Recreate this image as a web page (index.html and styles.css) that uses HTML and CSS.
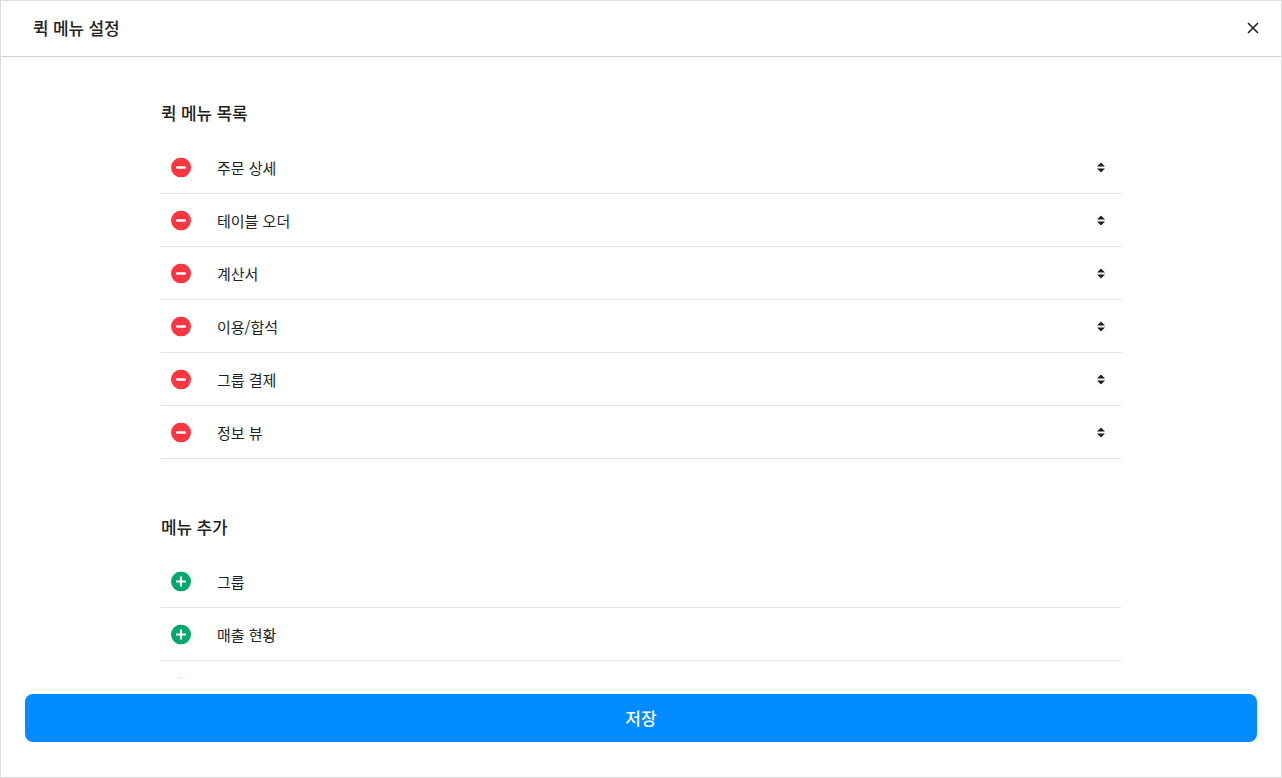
FILE: index.html
```html
<!DOCTYPE html>
<html lang="ko">
<head>
<meta charset="utf-8">
<title>퀵 메뉴 설정</title>
<link rel="stylesheet" href="styles.css">
</head>
<body>
<div class="modal">
  <header class="modal-header">
    <h1 class="modal-title">퀵 메뉴 설정</h1>
    <button class="close" aria-label="닫기">
      <svg width="12" height="12" viewBox="0 0 12 12"><path d="M1 1l10 10M11 1L1 11" stroke="#222" stroke-width="1.6" fill="none"/></svg>
    </button>
  </header>
  <main class="modal-body">
    <div class="content">
      <section class="group">
        <h2 class="group-title">퀵 메뉴 목록</h2>
        <ul class="list list-wide">
          <li class="row"><svg class="ic" viewBox="0 0 20 20"><circle cx="10" cy="10" r="10" fill="#fc3640"/><rect x="5" y="8.8" width="10" height="2.4" rx="1" fill="#fff"/></svg><span class="label">주문 상세</span><svg class="handle" viewBox="0 0 10 10"><path d="M5 0l4 4H1zM5 10L1 6h8z" fill="#1c1c1c"/></svg></li>
          <li class="row"><svg class="ic" viewBox="0 0 20 20"><circle cx="10" cy="10" r="10" fill="#fc3640"/><rect x="5" y="8.8" width="10" height="2.4" rx="1" fill="#fff"/></svg><span class="label">테이블 오더</span><svg class="handle" viewBox="0 0 10 10"><path d="M5 0l4 4H1zM5 10L1 6h8z" fill="#1c1c1c"/></svg></li>
          <li class="row"><svg class="ic" viewBox="0 0 20 20"><circle cx="10" cy="10" r="10" fill="#fc3640"/><rect x="5" y="8.8" width="10" height="2.4" rx="1" fill="#fff"/></svg><span class="label">계산서</span><svg class="handle" viewBox="0 0 10 10"><path d="M5 0l4 4H1zM5 10L1 6h8z" fill="#1c1c1c"/></svg></li>
          <li class="row"><svg class="ic" viewBox="0 0 20 20"><circle cx="10" cy="10" r="10" fill="#fc3640"/><rect x="5" y="8.8" width="10" height="2.4" rx="1" fill="#fff"/></svg><span class="label">이용/합석</span><svg class="handle" viewBox="0 0 10 10"><path d="M5 0l4 4H1zM5 10L1 6h8z" fill="#1c1c1c"/></svg></li>
          <li class="row"><svg class="ic" viewBox="0 0 20 20"><circle cx="10" cy="10" r="10" fill="#fc3640"/><rect x="5" y="8.8" width="10" height="2.4" rx="1" fill="#fff"/></svg><span class="label">그룹 결제</span><svg class="handle" viewBox="0 0 10 10"><path d="M5 0l4 4H1zM5 10L1 6h8z" fill="#1c1c1c"/></svg></li>
          <li class="row"><svg class="ic" viewBox="0 0 20 20"><circle cx="10" cy="10" r="10" fill="#fc3640"/><rect x="5" y="8.8" width="10" height="2.4" rx="1" fill="#fff"/></svg><span class="label">정보 뷰</span><svg class="handle" viewBox="0 0 10 10"><path d="M5 0l4 4H1zM5 10L1 6h8z" fill="#1c1c1c"/></svg></li>
        </ul>
      </section>
      <section class="group">
        <h2 class="group-title">메뉴 추가</h2>
        <ul class="list">
          <li class="row"><svg class="ic" viewBox="0 0 20 20"><circle cx="10" cy="10" r="10" fill="#00a96b"/><path d="M5 10h10M10 5v10" stroke="#fff" stroke-width="2.2"/></svg><span class="label">그룹</span></li>
          <li class="row"><svg class="ic" viewBox="0 0 20 20"><circle cx="10" cy="10" r="10" fill="#00a96b"/><path d="M5 10h10M10 5v10" stroke="#fff" stroke-width="2.2"/></svg><span class="label">매출 현황</span></li>
          <li class="row"><svg class="ic" viewBox="0 0 20 20"><circle cx="10" cy="10" r="10" fill="#00a96b"/><path d="M5 10h10M10 5v10" stroke="#fff" stroke-width="2.2"/></svg></li>
        </ul>
      </section>
    </div>
  </main>
  <footer class="modal-footer">
    <button class="save">저장</button>
  </footer>
</div>
</body>
</html>
```

FILE: styles.css
```css
* { box-sizing: border-box; }
html, body { margin: 0; height: 100%; }
body {
  background: #fff;
  color: #222;
  font-family: "Noto Sans CJK KR", "Noto Sans", sans-serif;
  overflow: hidden;
}
.modal {
  height: 778px;
  border: 1px solid #dcdcdc;
  display: flex;
  flex-direction: column;
  background: #fff;
}
.modal-header {
  flex: none;
  height: 56px;
  border-bottom: 1px solid #d0d0d0;
  display: flex;
  align-items: center;
  justify-content: space-between;
  padding: 0 22px 1px 32px;
}
.modal-title {
  margin: 0 0 1px;
  font-size: 17px;
  font-weight: 500;
  line-height: 24px;
  letter-spacing: -0.2px;
}
.close {
  border: 0;
  background: none;
  padding: 0;
  width: 12px;
  height: 12px;
  display: flex;
}
.modal-body {
  flex: 1;
  min-height: 0;
  overflow: hidden;
  padding-top: 44px;
}
.content {
  width: 960px;
  margin: 0 auto;
  display: flex;
  flex-direction: column;
  gap: 56px;
}
.group-title {
  margin: 0 0 17px;
  font-size: 17px;
  font-weight: 500;
  line-height: 23px;
  letter-spacing: -0.2px;
}
.list {
  list-style: none;
  margin: 0;
  padding: 0;
}
.list-wide { margin-right: -1px; }
.row {
  height: 53px;
  border-bottom: 1px solid #e4e4e4;
  display: flex;
  align-items: center;
  padding: 0 16px 0 10px;
}
.ic { width: 20px; height: 20px; flex: none; transform: translateY(0.5px); }
.label {
  margin: 2px 0 0 26px;
  font-size: 15px;
  line-height: 22px;
  flex: 1;
}
.handle { width: 10px; height: 10px; flex: none; transform: translateY(0.5px); }
.modal-footer {
  flex: none;
  padding: 16px 24px 35px;
}
.save {
  display: block;
  width: 100%;
  height: 48px;
  border: 0;
  border-radius: 8px;
  background: #008cff;
  color: #fff;
  font-family: inherit;
  font-size: 17px;
  font-weight: 500;
  padding: 0 0 2px;
}
```
